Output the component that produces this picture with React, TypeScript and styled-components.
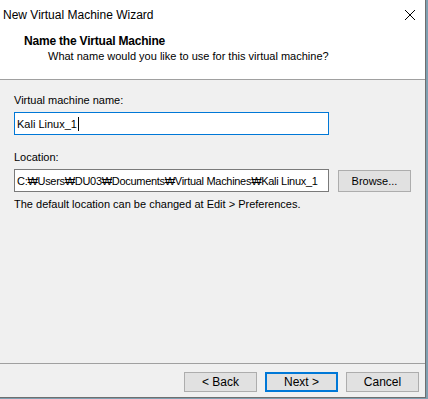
import styled, { createGlobalStyle } from "styled-components";

const GlobalStyle = createGlobalStyle`
  html, body {
    margin: 0;
    padding: 0;
    background: #7f9fb0;
    font-family: "Liberation Sans", "Noto Sans", Arial, sans-serif;
    font-size: 11px;
    color: #000;
  }
`;

const Window = styled.div`
  width: 426px;
  height: 398px;
  box-sizing: border-box;
  background: #f0f0f0;
  border-right: 1px solid #6f6f6f;
  border-bottom: 1px solid #6f6f6f;
  display: flex;
  flex-direction: column;
`;

const TitleBar = styled.div`
  height: 30px;
  background: #fff;
  display: flex;
  align-items: center;
  justify-content: space-between;
  padding: 0 9px 0 3px;
  font-size: 12px;
`;

const Header = styled.div`
  background: #fff;
  border-bottom: 1px solid #a0a0a0;
  padding: 4px 0 0 24px;
  height: 45px;
`;

const HeaderTitle = styled.div`
  font-weight: bold;
  font-size: 12px;
  line-height: 15px;
  letter-spacing: -0.2px;
`;

const HeaderSub = styled.div`
  padding-left: 24px;
  line-height: 15px;
`;

const Content = styled.div`
  flex: 1;
  padding: 13px 14px 0 14px;
  display: flex;
  flex-direction: column;
`;

const Label = styled.div<{ top?: number }>`
  line-height: 15px;
  margin-top: ${(p) => p.top ?? 0}px;
  margin-bottom: 4px;
`;

const Row = styled.div`
  display: flex;
  align-items: center;
  gap: 9px;
`;

const TextBox = styled.div<{ focused?: boolean; tight?: boolean }>`
  width: 315px;
  height: 23px;
  box-sizing: border-box;
  background: #fff;
  border: 1px solid ${(p) => (p.focused ? "#0078d7" : "#7a7a7a")};
  padding-left: 2px;
  display: flex;
  align-items: center;
  white-space: nowrap;
  overflow: hidden;
  letter-spacing: ${(p) => (p.tight ? "-0.3px" : "0")};
`;

const Caret = styled.span`
  display: inline-block;
  width: 1px;
  height: 14px;
  background: #000;
  margin-left: 1px;
`;

const Button = styled.div<{ primary?: boolean }>`
  width: 73px;
  height: 20px;
  box-sizing: border-box;
  background: #e1e1e1;
  border: ${(p) => (p.primary ? "2px solid #0078d7" : "1px solid #adadad")};
  display: flex;
  align-items: center;
  justify-content: center;
  font-size: 12px;
`;

const BrowseButton = styled(Button)`
  height: 22px;
  font-size: 11px;
`;

const Note = styled.div`
  line-height: 15px;
  margin-top: 5px;
`;

const Footer = styled.div`
  height: 34px;
  border-top: 1px solid #a0a0a0;
  display: flex;
  justify-content: flex-end;
  align-items: flex-start;
  gap: 8px;
  padding: 8px 6px 0 0;
  box-sizing: border-box;
`;

const CloseIcon = () => (
  <svg width="12" height="12" viewBox="0 0 12 12">
    <path d="M1 1 L11 11 M11 1 L1 11" stroke="#000" strokeWidth="1" />
  </svg>
);

export default function App() {
  return (
    <>
      <GlobalStyle />
      <Window>
        <TitleBar>
          <span>New Virtual Machine Wizard</span>
          <CloseIcon />
        </TitleBar>
        <Header>
          <HeaderTitle>Name the Virtual Machine</HeaderTitle>
          <HeaderSub>What name would you like to use for this virtual machine?</HeaderSub>
        </Header>
        <Content>
          <Label>Virtual machine name:</Label>
          <TextBox focused>
            Kali Linux_1
            <Caret />
          </TextBox>
          <Label top={15}>Location:</Label>
          <Row>
            <TextBox tight>C:₩Users₩DU03₩Documents₩Virtual Machines₩Kali Linux_1</TextBox>
            <BrowseButton>Browse...</BrowseButton>
          </Row>
          <Note>The default location can be changed at Edit &gt; Preferences.</Note>
        </Content>
        <Footer>
          <Button>&lt; Back</Button>
          <Button primary>Next &gt;</Button>
          <Button>Cancel</Button>
        </Footer>
      </Window>
    </>
  );
}
